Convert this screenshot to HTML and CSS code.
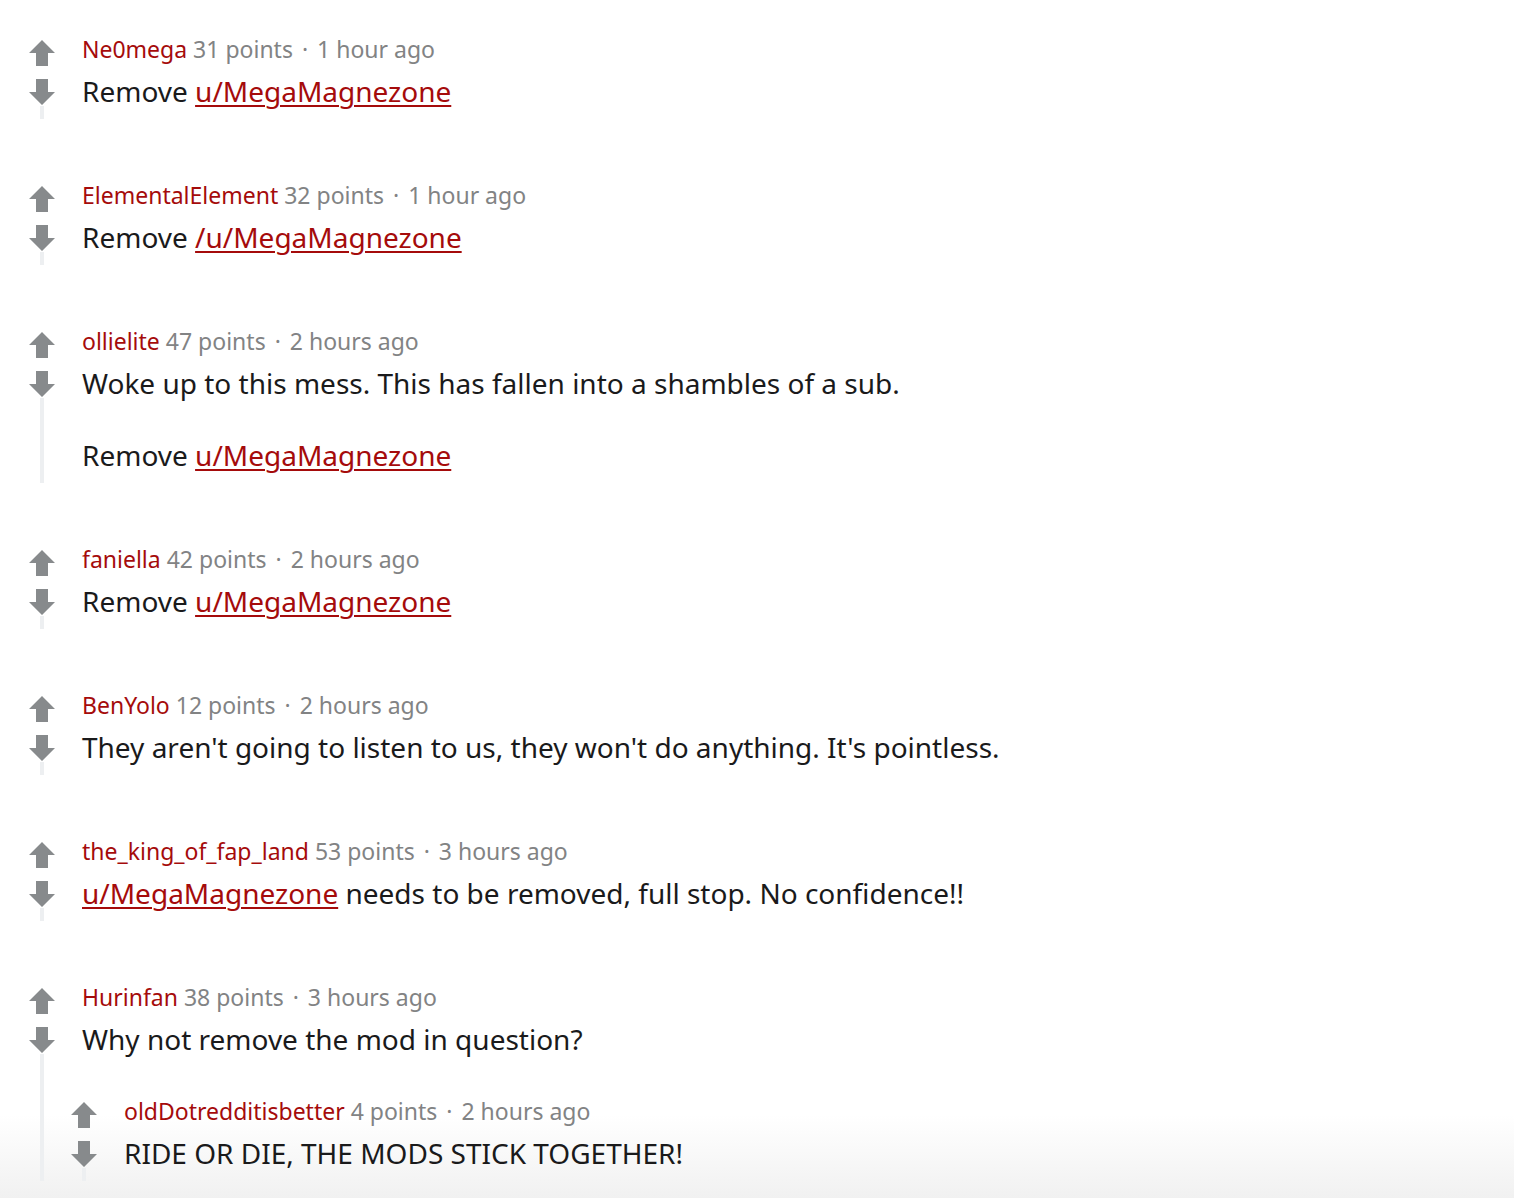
FILE: index.html
```html
<!DOCTYPE html>
<html lang="en">
<head>
<meta charset="utf-8">
<title>Comments</title>
<link rel="stylesheet" href="styles.css">
</head>
<body>
<div class="page">
  <div class="thread">

    <div class="comment">
      <div class="rail">
        <svg class="vote" viewBox="0 0 26 26"><path d="M13 0 L26 13 L19 13 L19 26 L7 26 L7 13 L0 13 Z"/></svg>
        <svg class="vote down" viewBox="0 0 26 26"><path d="M13 26 L26 13 L19 13 L19 0 L7 0 L7 13 L0 13 Z"/></svg>
        <div class="line"></div>
      </div>
      <div class="main">
        <div class="meta"><a class="author">Ne0mega</a> 31 points <span class="sep">·</span> 1 hour ago</div>
        <div class="body"><p>Remove <a class="link">u/MegaMagnezone</a></p></div>
      </div>
    </div>

    <div class="comment">
      <div class="rail">
        <svg class="vote" viewBox="0 0 26 26"><path d="M13 0 L26 13 L19 13 L19 26 L7 26 L7 13 L0 13 Z"/></svg>
        <svg class="vote down" viewBox="0 0 26 26"><path d="M13 26 L26 13 L19 13 L19 0 L7 0 L7 13 L0 13 Z"/></svg>
        <div class="line"></div>
      </div>
      <div class="main">
        <div class="meta"><a class="author">ElementalElement</a> 32 points <span class="sep">·</span> 1 hour ago</div>
        <div class="body"><p>Remove <a class="link">/u/MegaMagnezone</a></p></div>
      </div>
    </div>

    <div class="comment">
      <div class="rail">
        <svg class="vote" viewBox="0 0 26 26"><path d="M13 0 L26 13 L19 13 L19 26 L7 26 L7 13 L0 13 Z"/></svg>
        <svg class="vote down" viewBox="0 0 26 26"><path d="M13 26 L26 13 L19 13 L19 0 L7 0 L7 13 L0 13 Z"/></svg>
        <div class="line"></div>
      </div>
      <div class="main">
        <div class="meta"><a class="author">ollielite</a> 47 points <span class="sep">·</span> 2 hours ago</div>
        <div class="body">
          <p>Woke up to this mess. This has fallen into a shambles of a sub.</p>
          <p>Remove <a class="link">u/MegaMagnezone</a></p>
        </div>
      </div>
    </div>

    <div class="comment">
      <div class="rail">
        <svg class="vote" viewBox="0 0 26 26"><path d="M13 0 L26 13 L19 13 L19 26 L7 26 L7 13 L0 13 Z"/></svg>
        <svg class="vote down" viewBox="0 0 26 26"><path d="M13 26 L26 13 L19 13 L19 0 L7 0 L7 13 L0 13 Z"/></svg>
        <div class="line"></div>
      </div>
      <div class="main">
        <div class="meta"><a class="author">faniella</a> 42 points <span class="sep">·</span> 2 hours ago</div>
        <div class="body"><p>Remove <a class="link">u/MegaMagnezone</a></p></div>
      </div>
    </div>

    <div class="comment">
      <div class="rail">
        <svg class="vote" viewBox="0 0 26 26"><path d="M13 0 L26 13 L19 13 L19 26 L7 26 L7 13 L0 13 Z"/></svg>
        <svg class="vote down" viewBox="0 0 26 26"><path d="M13 26 L26 13 L19 13 L19 0 L7 0 L7 13 L0 13 Z"/></svg>
        <div class="line"></div>
      </div>
      <div class="main">
        <div class="meta"><a class="author">BenYolo</a> 12 points <span class="sep">·</span> 2 hours ago</div>
        <div class="body"><p>They aren't going to listen to us, they won't do anything. It's pointless.</p></div>
      </div>
    </div>

    <div class="comment">
      <div class="rail">
        <svg class="vote" viewBox="0 0 26 26"><path d="M13 0 L26 13 L19 13 L19 26 L7 26 L7 13 L0 13 Z"/></svg>
        <svg class="vote down" viewBox="0 0 26 26"><path d="M13 26 L26 13 L19 13 L19 0 L7 0 L7 13 L0 13 Z"/></svg>
        <div class="line"></div>
      </div>
      <div class="main">
        <div class="meta"><a class="author">the_king_of_fap_land</a> 53 points <span class="sep">·</span> 3 hours ago</div>
        <div class="body"><p><a class="link">u/MegaMagnezone</a> needs to be removed, full stop. No confidence!!</p></div>
      </div>
    </div>

    <div class="comment">
      <div class="rail">
        <svg class="vote" viewBox="0 0 26 26"><path d="M13 0 L26 13 L19 13 L19 26 L7 26 L7 13 L0 13 Z"/></svg>
        <svg class="vote down" viewBox="0 0 26 26"><path d="M13 26 L26 13 L19 13 L19 0 L7 0 L7 13 L0 13 Z"/></svg>
        <div class="line"></div>
      </div>
      <div class="main">
        <div class="meta"><a class="author">Hurinfan</a> 38 points <span class="sep">·</span> 3 hours ago</div>
        <div class="body"><p>Why not remove the mod in question?</p></div>
        <div class="children">
          <div class="comment">
            <div class="rail">
              <svg class="vote" viewBox="0 0 26 26"><path d="M13 0 L26 13 L19 13 L19 26 L7 26 L7 13 L0 13 Z"/></svg>
              <svg class="vote down" viewBox="0 0 26 26"><path d="M13 26 L26 13 L19 13 L19 0 L7 0 L7 13 L0 13 Z"/></svg>
              <div class="line"></div>
            </div>
            <div class="main">
              <div class="meta"><a class="author">oldDotredditisbetter</a> 4 points <span class="sep">·</span> 2 hours ago</div>
              <div class="body"><p>RIDE OR DIE, THE MODS STICK TOGETHER!</p></div>
            </div>
          </div>
        </div>
      </div>
    </div>

  </div>
</div>
</body>
</html>
```

FILE: styles.css
```css
html, body {
  margin: 0;
  padding: 0;
}

body {
  width: 1514px;
  min-height: 1198px;
  font-family: "Noto Sans", "Open Sans", "DejaVu Sans", sans-serif;
  color: #1a1a1b;
  background: linear-gradient(to bottom, #ffffff 0, #ffffff 1115px, #f1f1f1 1198px);
  background-repeat: no-repeat;
}

.page {
  padding-top: 33px;
}

.thread {
  display: flex;
  flex-direction: column;
  gap: 60px;
}

.comment {
  display: flex;
  align-items: stretch;
}

.rail {
  width: 26px;
  margin-left: 29px;
  margin-right: 27px;
  padding-top: 7px;
  display: flex;
  flex-direction: column;
  align-items: center;
  flex: none;
}

.vote {
  width: 26px;
  height: 26px;
  display: block;
  fill: #878a8c;
}

.vote.down {
  margin-top: 13px;
}

.line {
  flex: 1;
  width: 4px;
  margin-top: 1px;
  background: #edeff1;
}

.main {
  flex: 1;
  min-width: 0;
}

.meta {
  font-size: 23px;
  line-height: 32px;
  color: #828384;
  margin-bottom: 5px;
  white-space: nowrap;
}

.sep {
  margin: 0 3px;
}

.author {
  color: #a50b0b;
  text-decoration: none;
}

.body {
  font-size: 28px;
  line-height: 42px;
  padding-bottom: 7px;
}

.body p {
  margin: 0;
}

.body p + p {
  margin-top: 30px;
}

.link {
  color: #a50b0b;
  text-decoration: underline;
  text-decoration-thickness: 2px;
  text-underline-offset: 3px;
}

.children {
  margin-left: -40px;
  margin-top: 28px;
}
```
